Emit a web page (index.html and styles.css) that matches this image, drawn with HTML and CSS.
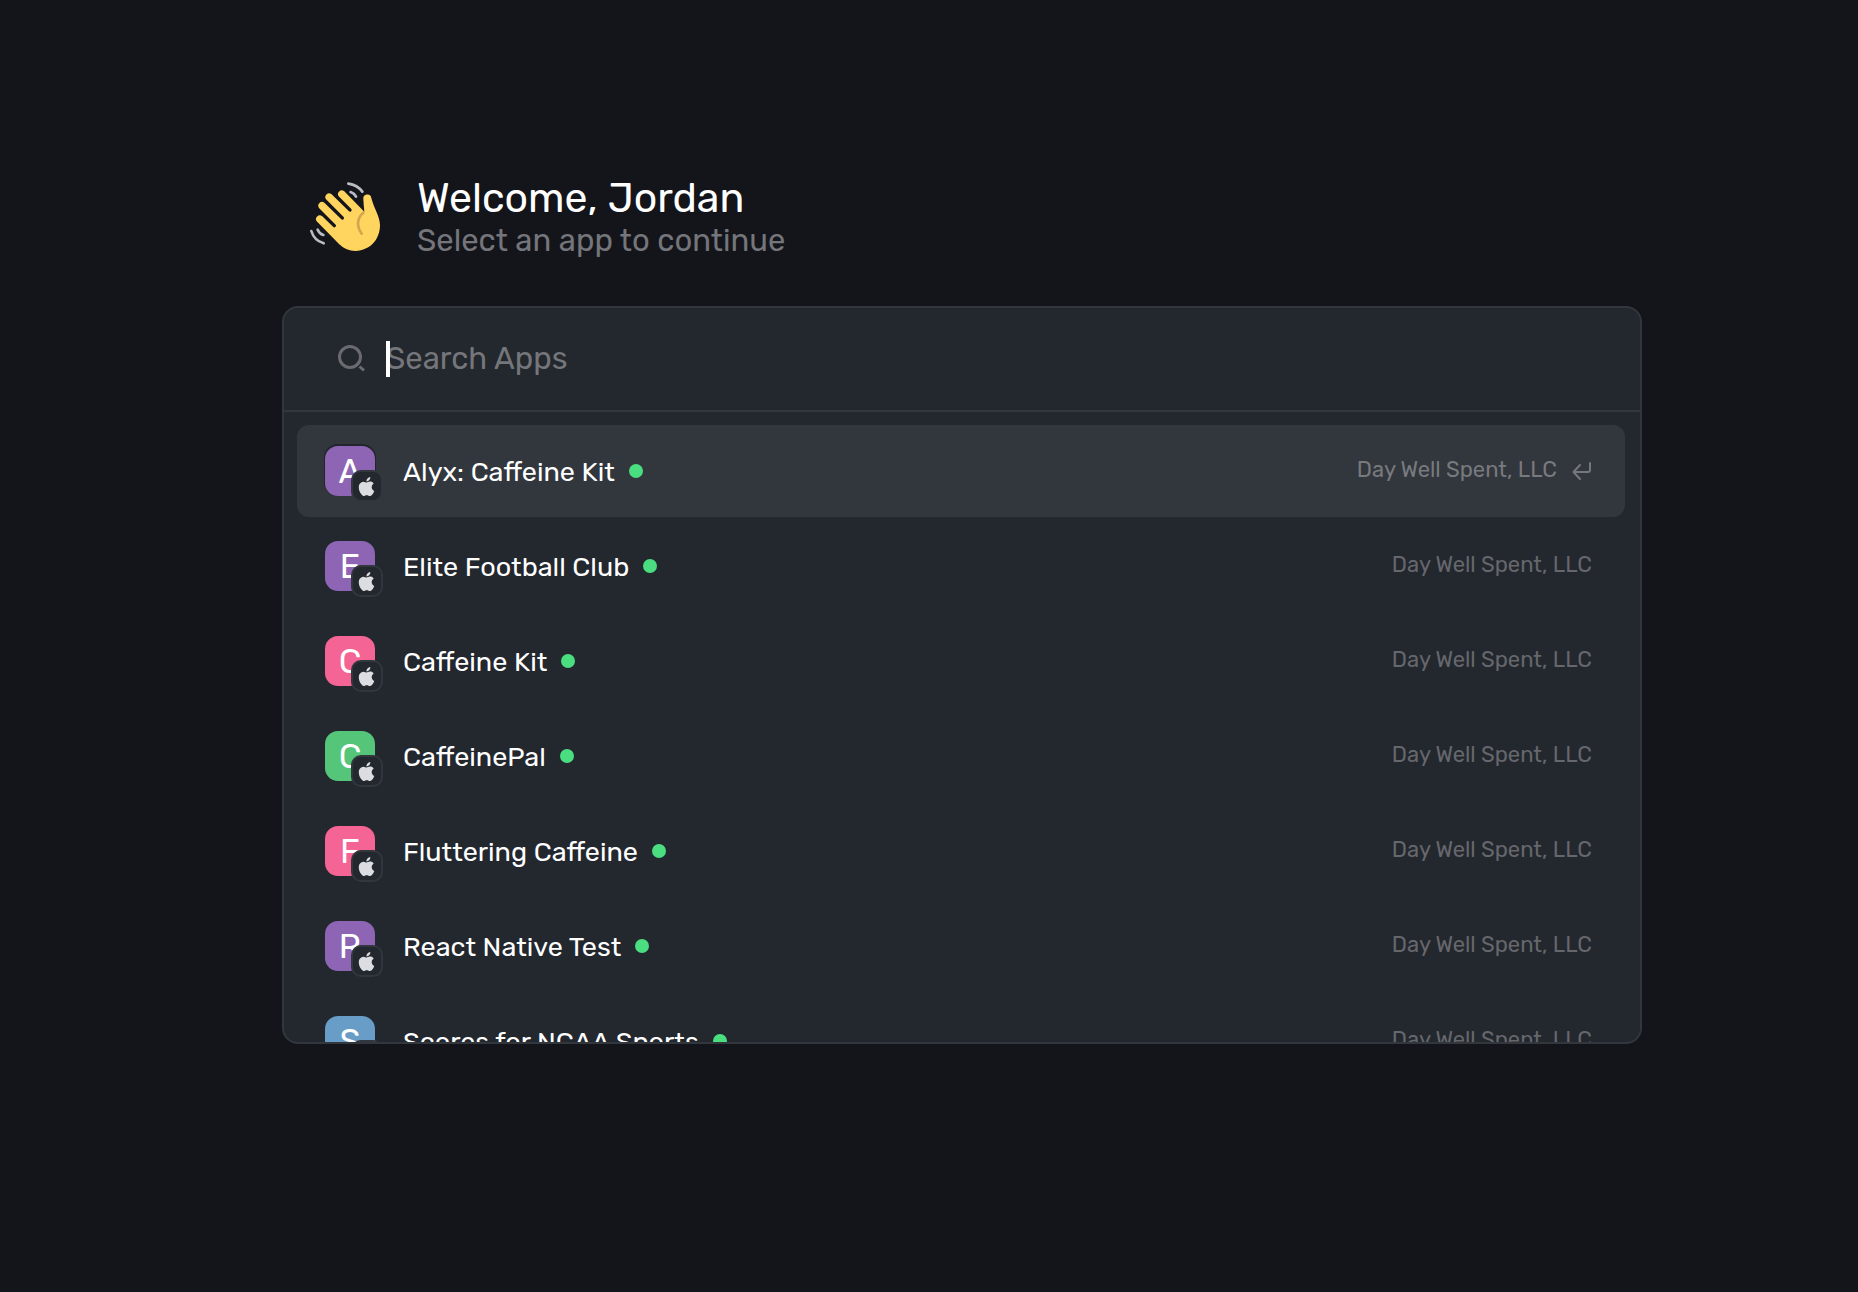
FILE: index.html
```html
<!DOCTYPE html>
<html lang="en">
 <head>
  <meta charset="UTF-8" />
  <meta name="viewport" content="width=device-width, initial-scale=1.0" />
  <title>Select an app</title>
  <link rel="stylesheet" href="styles.css">
 </head>
 <body>
  <!-- shared shapes -->
  <svg class="defs" aria-hidden="true">
   <symbol id="apple" viewBox="0 0 24 24">
    <path d="M12.152 6.896c-.948 0-2.415-1.078-3.96-1.04-2.04.027-3.91 1.183-4.961 3.014-2.117 3.675-.546 9.103 1.519 12.09 1.013 1.454 2.208 3.09 3.792 3.039 1.52-.065 2.09-.987 3.935-.987 1.831 0 2.35.987 3.96.948 1.637-.026 2.676-1.48 3.676-2.948 1.156-1.688 1.636-3.325 1.662-3.415-.039-.013-3.182-1.221-3.22-4.857-.026-3.04 2.48-4.494 2.597-4.559-1.429-2.09-3.623-2.324-4.39-2.376-2-.156-3.675 1.09-4.61 1.09zM15.53 3.83c.843-1.012 1.4-2.427 1.245-3.83-1.207.052-2.662.805-3.532 1.818-.78.896-1.454 2.338-1.273 3.714 1.338.104 2.715-.688 3.559-1.701" />
   </symbol>
  </svg>
  <main class="page">
   <header class="welcome">
    <svg class="wave" viewBox="30 48 213 213" aria-hidden="true">
     <path class="wave-hand" d="M193 140L132 78A11.5 11.5 0 0 0 116 94L154 132a5 5 0 0 1-7 7L94 87A11.5 11.5 0 0 0 78 103L131 156a5 5 0 0 1-7 7L73 113A11.5 11.5 0 0 0 57 129L107 179a5 5 0 0 1-7 7L66 153A11.5 11.5 0 0 0 50 169L117 237Q138 258 166 258C212 256 240 222 240 180C240 155 222 130 214 99A12 12 0 0 0 190 102Q191 120 193 140Z" />
     <path class="wave-crease" d="M190 143C172 158 168 182 185 206" />
     <path class="wave-motion" d="M145 56Q172 60 187 80M152 81Q163 85 168 95M34 198Q42 226 71 235M53 194Q58 206 70 210" />
    </svg>
    <div>
     <h1>Welcome, Jordan</h1>
     <p>Select an app to continue</p>
    </div>
   </header>
   <section class="panel">
    <div class="search">
     <svg class="search-icon" viewBox="0 0 28 28" aria-hidden="true">
      <circle cx="12" cy="12" r="10.5" />
      <path d="M21.500 21.500l4.500 4" />
     </svg>
     <div class="search-field">
      <input type="text" id="search" aria-label="Search Apps" placeholder="Search Apps" />
      <span class="caret"></span>
     </div>
    </div>
    <ul class="apps">
     <li>
      <a class="app selected" href="#">
       <span class="app-icon purple">A<span class="badge"><svg><use href="#apple" /></svg></span></span>
       <span class="app-name">Alyx: Caffeine Kit</span>
       <span class="dot"></span>
       <span class="company">Day Well Spent, LLC</span>
       <svg class="enter" viewBox="0 0 20 20" aria-hidden="true"><path d="M18 2v7q0 2-2 2H2M8 4l-6.500 7L8 18" /></svg>
      </a>
     </li>
     <li>
      <a class="app" href="#">
       <span class="app-icon purple">E<span class="badge"><svg><use href="#apple" /></svg></span></span>
       <span class="app-name">Elite Football Club</span>
       <span class="dot"></span>
       <span class="company">Day Well Spent, LLC</span>
      </a>
     </li>
     <li>
      <a class="app" href="#">
       <span class="app-icon pink">C<span class="badge"><svg><use href="#apple" /></svg></span></span>
       <span class="app-name">Caffeine Kit</span>
       <span class="dot"></span>
       <span class="company">Day Well Spent, LLC</span>
      </a>
     </li>
     <li>
      <a class="app" href="#">
       <span class="app-icon green">C<span class="badge"><svg><use href="#apple" /></svg></span></span>
       <span class="app-name">CaffeinePal</span>
       <span class="dot"></span>
       <span class="company">Day Well Spent, LLC</span>
      </a>
     </li>
     <li>
      <a class="app" href="#">
       <span class="app-icon pink">F<span class="badge"><svg><use href="#apple" /></svg></span></span>
       <span class="app-name">Fluttering Caffeine</span>
       <span class="dot"></span>
       <span class="company">Day Well Spent, LLC</span>
      </a>
     </li>
     <li>
      <a class="app" href="#">
       <span class="app-icon purple">R<span class="badge"><svg><use href="#apple" /></svg></span></span>
       <span class="app-name">React Native Test</span>
       <span class="dot"></span>
       <span class="company">Day Well Spent, LLC</span>
      </a>
     </li>
     <li>
      <a class="app" href="#">
       <span class="app-icon blue">S<span class="badge"><svg><use href="#apple" /></svg></span></span>
       <span class="app-name">Scores for NCAA Sports</span>
       <span class="dot"></span>
       <span class="company">Day Well Spent, LLC</span>
      </a>
     </li>
    </ul>
   </section>
  </main>
 </body>
</html>
```
FILE: styles.css
```css
* {
 box-sizing: border-box;
}
body {
 margin: 0;
 min-height: 100vh;
 background-color: #14151a;
 color: #fff;
 font-family: Rubik, Roboto, sans-serif;
}
.defs {
 display: none;
}
.page {
 max-width: 1426px;
 margin: 0 auto;
 padding: 174px 0 40px 66px;
}
.welcome {
 display: flex;
 align-items: center;
 gap: 36px;
 height: 84px;
 padding-left: 28px;
 margin-bottom: 48px;
}
.wave {
 width: 71px;
 height: 71px;
}
.wave-hand {
 fill: #ffd55f;
}
.wave-crease {
 fill: none;
 stroke: #d1a64f;
 stroke-width: 8;
 stroke-linecap: round;
}
.wave-motion {
 fill: none;
 stroke: #b9bcc2;
 stroke-width: 8;
 stroke-linecap: round;
}
h1 {
 margin: 0;
 padding-top: 4px;
 font-size: 41px;
 line-height: 46px;
 font-weight: 400;
}
.welcome p {
 margin: 0;
 font-size: 31px;
 line-height: 40px;
 color: #74767b;
}
.panel {
 border: 2px solid #32363d;
 border-radius: 16px;
 background-color: #23272e;
 overflow: hidden;
}
.search {
 display: flex;
 align-items: center;
 gap: 20px;
 height: 104px;
 padding: 0 54px;
 border-bottom: 2px solid #32363d;
}
.search-icon {
 width: 28px;
 height: 28px;
 fill: none;
 stroke: #6a6b6f;
 stroke-width: 3;
}
.search-field {
 position: relative;
 flex: 1;
}
#search {
 display: block;
 width: 100%;
 padding: 0;
 border: none;
 outline: none;
 background: none;
 color: #fff;
 font-family: inherit;
 font-size: 31px;
 line-height: 36px;
}
#search::placeholder {
 color: #74767a;
 opacity: 1;
}
.caret {
 position: absolute;
 top: 0;
 left: 0;
 width: 4px;
 height: 36px;
 background-color: #fff;
}
.apps {
 display: flex;
 flex-direction: column;
 gap: 3px;
 max-height: 630px;
 margin: 0;
 padding: 13px 15px 13px 13px;
 list-style: none;
 overflow-y: auto;
 scrollbar-width: none;
}
.app {
 display: flex;
 align-items: center;
 height: 92px;
 padding: 0 33px 0 28px;
 border-radius: 12px;
 color: #fff;
 text-decoration: none;
}
.selected {
 background-color: #32363d;
}
.app-icon {
 position: relative;
 width: 50px;
 height: 50px;
 margin-right: 28px;
 border-radius: 13px;
 font-size: 34px;
 line-height: 52px;
 text-align: center;
}
.selected .app-icon {
 box-shadow: 0 -1px 0 1px #22262c;
}
.purple {
 background-color: #8d65b4;
}
.pink {
 background-color: #f46494;
}
.green {
 background-color: #55c57a;
}
.blue {
 background-color: #689dc8;
}
.badge {
 position: absolute;
 top: 24px;
 left: 26px;
 display: flex;
 align-items: center;
 justify-content: center;
 width: 32px;
 height: 32px;
 border: 2px solid #32363d;
 border-radius: 10px;
 background-color: #23272e;
}
.badge svg {
 width: 19px;
 height: 19px;
 margin-right: 1px;
 fill: #dcdde0;
}
.app-name {
 padding-top: 1px;
 font-size: 27px;
 line-height: 34px;
}
.dot {
 width: 14px;
 height: 14px;
 margin-left: 14px;
 border-radius: 50%;
 background-color: #4ade80;
}
.company {
 margin-left: auto;
 padding-bottom: 3px;
 font-size: 22px;
 line-height: 28px;
 color: #66676c;
}
.selected .company {
 color: #787a7e;
}
.enter {
 width: 20px;
 height: 20px;
 margin-left: 15px;
 fill: none;
 stroke: #75777b;
 stroke-width: 2;
 stroke-linecap: round;
 stroke-linejoin: round;
}
```
